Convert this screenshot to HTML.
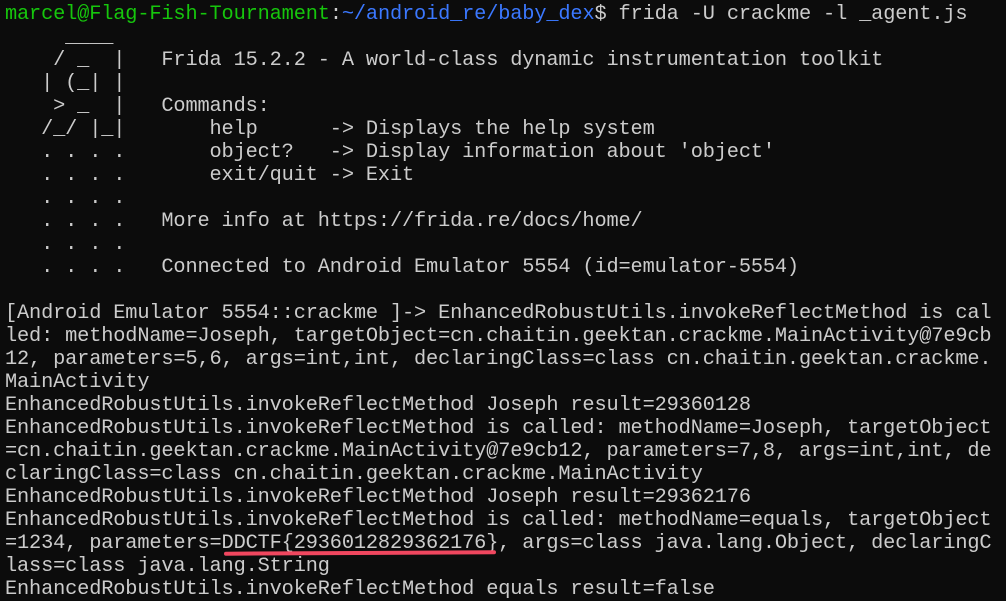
<!DOCTYPE html>
<html><head><style>
html,body{margin:0;background:#0c0c0c;width:1006px;height:600px;overflow:hidden}
pre{margin:0;position:absolute;left:5px;top:3px;font-family:"Liberation Mono",monospace;font-size:20px;letter-spacing:-0.15px;line-height:23px;color:#cccccc;white-space:pre;transform:scaleX(1.015);transform-origin:0 0}
.g{color:#16c60c}.b{color:#3b78ff}
.u{position:absolute;left:224px;top:551px;width:272px;height:4px;background:#f0475f;border-radius:3px;transform:rotate(-0.3deg)}
</style></head><body>
<pre><span class="g">marcel@Flag-Fish-Tournament</span>:<span class="b">~/android_re/baby_dex</span>$ frida -U crackme -l _agent.js
     ____
    / _  |   Frida 15.2.2 - A world-class dynamic instrumentation toolkit
   | (_| |
    > _  |   Commands:
   /_/ |_|       help      -> Displays the help system
   . . . .       object?   -> Display information about 'object'
   . . . .       exit/quit -> Exit
   . . . .
   . . . .   More info at https://frida.re/docs/home/
   . . . .
   . . . .   Connected to Android Emulator 5554 (id=emulator-5554)

[Android Emulator 5554::crackme ]-> EnhancedRobustUtils.invokeReflectMethod is cal
led: methodName=Joseph, targetObject=cn.chaitin.geektan.crackme.MainActivity@7e9cb
12, parameters=5,6, args=int,int, declaringClass=class cn.chaitin.geektan.crackme.
MainActivity
EnhancedRobustUtils.invokeReflectMethod Joseph result=29360128
EnhancedRobustUtils.invokeReflectMethod is called: methodName=Joseph, targetObject
=cn.chaitin.geektan.crackme.MainActivity@7e9cb12, parameters=7,8, args=int,int, de
claringClass=class cn.chaitin.geektan.crackme.MainActivity
EnhancedRobustUtils.invokeReflectMethod Joseph result=29362176
EnhancedRobustUtils.invokeReflectMethod is called: methodName=equals, targetObject
=1234, parameters=DDCTF{2936012829362176}, args=class java.lang.Object, declaringC
lass=class java.lang.String
EnhancedRobustUtils.invokeReflectMethod equals result=false</pre>
<div class="u"></div>
</body></html>
